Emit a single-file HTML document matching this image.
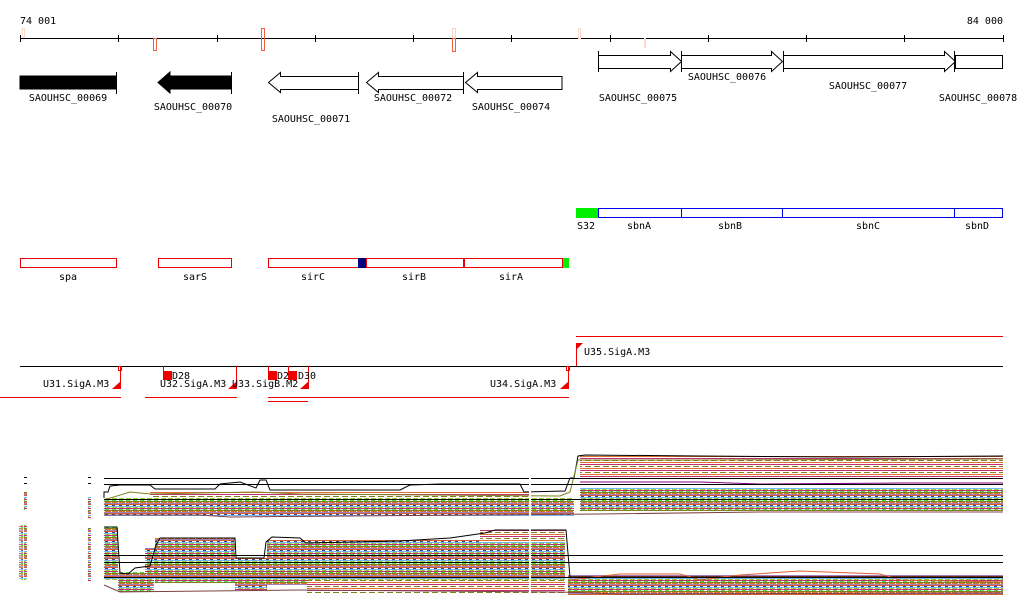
<!DOCTYPE html>
<html><head><meta charset="utf-8"><style>
html,body{margin:0;padding:0;background:#fff;width:1024px;height:611px;overflow:hidden}
svg text{font-family:"DejaVu Sans Mono","Liberation Mono",monospace;font-size:10px;fill:#000}
</style></head><body>
<svg width="1024" height="611" viewBox="0 0 1024 611" xmlns="http://www.w3.org/2000/svg">
<defs>
<pattern id="p" width="7" height="9" patternUnits="userSpaceOnUse">
<rect width="7" height="9" fill="#fff"/>
<rect y="0" width="7" height="1" fill="#d06030"/>
<rect y="1" width="3" height="1" fill="#3a3a8a"/>
<rect y="2" width="7" height="1" fill="#6fb5ff"/>
<rect y="3" width="5" height="1" fill="#9acd32"/>
<rect y="4" width="7" height="1" fill="#c03070"/>
<rect y="5" width="4" height="1" fill="#40e040"/>
<rect y="6" width="7" height="1" fill="#808020"/>
<rect y="7" width="6" height="1" fill="#e07030"/>
<rect y="8" width="7" height="1" fill="#a080c0"/>
</pattern>
<pattern id="q" width="9" height="6" patternUnits="userSpaceOnUse">
<rect width="9" height="6" fill="#fff"/>
<rect y="0" width="9" height="1" fill="#e07030"/>
<rect y="2" width="9" height="1" fill="#c03070"/>
<rect y="4" width="6" height="1" fill="#808020"/>
</pattern>
</defs>

<!-- ruler -->
<text x="20" y="24">74 001</text>
<text x="1003" y="24" text-anchor="end">84 000</text>
<line x1="20" y1="38.5" x2="1003" y2="38.5" stroke="#000"/>
<g stroke="#000">
<line x1="20.5" y1="35" x2="20.5" y2="42"/><line x1="118.5" y1="35" x2="118.5" y2="42"/>
<line x1="217.5" y1="35" x2="217.5" y2="42"/><line x1="315.5" y1="35" x2="315.5" y2="42"/>
<line x1="413.5" y1="35" x2="413.5" y2="42"/><line x1="511.5" y1="35" x2="511.5" y2="42"/>
<line x1="610.5" y1="35" x2="610.5" y2="42"/><line x1="708.5" y1="35" x2="708.5" y2="42"/>
<line x1="806.5" y1="35" x2="806.5" y2="42"/><line x1="904.5" y1="35" x2="904.5" y2="42"/>
<line x1="1003.5" y1="35" x2="1003.5" y2="42"/>
</g>
<g fill="none">
<rect x="22.5" y="28.5" width="2" height="9" stroke="#fcd8cc"/>
<rect x="153.5" y="38.5" width="3" height="12" stroke="#f06040"/>
<rect x="261.5" y="28.5" width="3" height="22" stroke="#f06040"/>
<rect x="452.5" y="28.5" width="3" height="10" stroke="#fcd0c0"/>
<rect x="452.5" y="38.5" width="3" height="13" stroke="#f06040"/>
<rect x="578.5" y="28.5" width="2" height="10" stroke="#fcd8cc"/>
<rect x="644" y="38" width="2" height="10" fill="#fcd8cc"/>
</g>

<!-- genes -->
<g stroke="#000" stroke-width="1">
<rect x="20" y="76" width="96" height="13" fill="#000"/>
<line x1="116.5" y1="72" x2="116.5" y2="94"/>
<polygon points="158,82.5 170,72 170,76 231,76 231,89 170,89 170,93" fill="#000"/>
<line x1="231.5" y1="72" x2="231.5" y2="94"/>
<polygon points="268.5,82.5 280.5,72.5 280.5,76.5 358.5,76.5 358.5,89.5 280.5,89.5 280.5,92.5" fill="#fff"/>
<line x1="358.5" y1="72" x2="358.5" y2="94"/>
<polygon points="366.5,82.5 378.5,72.5 378.5,76.5 463.5,76.5 463.5,89.5 378.5,89.5 378.5,92.5" fill="#fff"/>
<line x1="463.5" y1="72" x2="463.5" y2="94"/>
<polygon points="465.5,82.5 477.5,72.5 477.5,76.5 562,76.5 562,89.5 477.5,89.5 477.5,92.5" fill="#fff"/>
<polygon points="598.5,55.5 670.5,55.5 670.5,51.5 681.5,61.5 670.5,71.5 670.5,68.5 598.5,68.5" fill="#fff"/>
<line x1="598.5" y1="51" x2="598.5" y2="72"/>
<polygon points="681.5,55.5 771.5,55.5 771.5,51.5 782.5,61.5 771.5,71.5 771.5,68.5 681.5,68.5" fill="#fff"/>
<line x1="681.5" y1="51" x2="681.5" y2="72"/>
<polygon points="783.5,55.5 944.5,55.5 944.5,51.5 955.5,61.5 944.5,71.5 944.5,68.5 783.5,68.5" fill="#fff"/>
<line x1="783.5" y1="51" x2="783.5" y2="72"/>
<rect x="955.5" y="55.5" width="47" height="13" fill="#fff"/>
<line x1="954.5" y1="51" x2="954.5" y2="72"/>
</g>
<text x="68" y="101" text-anchor="middle">SAOUHSC_00069</text>
<text x="193" y="110" text-anchor="middle">SAOUHSC_00070</text>
<text x="311" y="122" text-anchor="middle">SAOUHSC_00071</text>
<text x="413" y="101" text-anchor="middle">SAOUHSC_00072</text>
<text x="511" y="110" text-anchor="middle">SAOUHSC_00074</text>
<text x="638" y="101" text-anchor="middle">SAOUHSC_00075</text>
<text x="727" y="80" text-anchor="middle">SAOUHSC_00076</text>
<text x="868" y="89" text-anchor="middle">SAOUHSC_00077</text>
<text x="978" y="101" text-anchor="middle">SAOUHSC_00078</text>

<!-- operon blue -->
<rect x="576" y="208" width="22" height="10" fill="#00ee00"/>
<g fill="#fff" stroke="#0000ee">
<rect x="598.5" y="208.5" width="83" height="9"/>
<rect x="681.5" y="208.5" width="101" height="9"/>
<rect x="782.5" y="208.5" width="172" height="9"/>
<rect x="954.5" y="208.5" width="48" height="9"/>
</g>
<text x="577" y="229">S32</text>
<text x="639" y="229" text-anchor="middle">sbnA</text>
<text x="730" y="229" text-anchor="middle">sbnB</text>
<text x="868" y="229" text-anchor="middle">sbnC</text>
<text x="977" y="229" text-anchor="middle">sbnD</text>

<!-- red boxes -->
<g fill="#fff" stroke="#ee0000">
<rect x="20.5" y="258.5" width="96" height="9"/>
<rect x="158.5" y="258.5" width="73" height="9"/>
<rect x="268.5" y="258.5" width="90" height="9"/>
<rect x="366.5" y="258.5" width="97" height="9"/>
<rect x="464.5" y="258.5" width="98" height="9"/>
</g>
<rect x="358" y="258" width="8" height="10" fill="#000080"/>
<rect x="563" y="258" width="6" height="10" fill="#00ee00"/>
<text x="68" y="280" text-anchor="middle">spa</text>
<text x="195" y="280" text-anchor="middle">sarS</text>
<text x="313" y="280" text-anchor="middle">sirC</text>
<text x="414" y="280" text-anchor="middle">sirB</text>
<text x="511" y="280" text-anchor="middle">sirA</text>

<!-- promoters -->
<line x1="20" y1="366.5" x2="1003" y2="366.5" stroke="#000"/>
<line x1="576" y1="336.5" x2="1003" y2="336.5" stroke="#ee0000"/>
<g stroke="#ee0000" fill="none">
<line x1="576.5" y1="343" x2="576.5" y2="366"/>
<line x1="0" y1="397.5" x2="121" y2="397.5"/>
<line x1="145" y1="397.5" x2="237" y2="397.5"/>
<line x1="268" y1="397.5" x2="569" y2="397.5"/>
<line x1="268" y1="401.5" x2="308" y2="401.5"/>
<line x1="120.5" y1="366" x2="120.5" y2="389"/>
<rect x="118.5" y="366.5" width="3" height="4"/>
<line x1="236.5" y1="366" x2="236.5" y2="389"/>
<line x1="163.5" y1="366" x2="163.5" y2="372"/>
<line x1="268.5" y1="366" x2="268.5" y2="372"/>
<line x1="288.5" y1="366" x2="288.5" y2="372"/>
<line x1="308.5" y1="366" x2="308.5" y2="389"/>
<line x1="568.5" y1="366" x2="568.5" y2="389"/>
<rect x="566.5" y="366.5" width="3" height="4"/>
</g>
<g fill="#ee0000">
<polygon points="576,343 583,343 576,350"/>
<polygon points="112,389 121,389 121,381"/>
<polygon points="228,389 237,389 237,381"/>
<polygon points="300,389 309,389 309,381"/>
<polygon points="560,389 569,389 569,381"/>
<rect x="163" y="371" width="9" height="9"/>
<rect x="268" y="371" width="9" height="9"/>
<rect x="288" y="371" width="9" height="9"/>
</g>
<text x="584" y="355">U35.SigA.M3</text>
<text x="43" y="387">U31.SigA.M3</text>
<text x="160" y="387">U32.SigA.M3</text>
<text x="232" y="387">U33.SigB.M2</text>
<text x="490" y="387">U34.SigA.M3</text>
<text x="172" y="379">D28</text>
<text x="277" y="379">D2</text>
<text x="298" y="379">D30</text>

<!-- legends -->
<g>
<rect x="24" y="477" width="3" height="1" fill="#000"/><rect x="24" y="483" width="3" height="1" fill="#000"/>
<rect x="24" y="492" width="3" height="18" fill="url(#p)"/>
<rect x="88" y="477" width="3" height="1" fill="#000"/><rect x="88" y="483" width="3" height="1" fill="#000"/>
<rect x="88" y="497" width="3" height="22" fill="url(#p)"/>
<rect x="19" y="525" width="4" height="55" fill="url(#p)" opacity=".8"/>
<rect x="24" y="525" width="3" height="55" fill="url(#p)"/>
<rect x="88" y="527" width="3" height="55" fill="url(#p)"/>
</g>

<!-- panel 1 -->
<g>
<rect x="104" y="498" width="470" height="18" fill="url(#p)"/>
<rect x="150" y="491" width="380" height="7" fill="url(#q)"/>
<rect x="580" y="488" width="423" height="23" fill="url(#p)"/>
<rect x="580" y="455" width="423" height="25" fill="url(#q)"/>
<polyline fill="none" stroke="#000" points="104,498 104,492 108,492 110,486 120,485 150,485 155,489 215,489 220,484 240,482 256,488 260,480 266,480 270,490 400,490 410,485 440,484 520,484 524,492 565,491 570,478 574,478 578,456 585,455 700,456 840,457 1003,456"/>
<polyline fill="none" stroke="#808020" points="104,500 130,492 150,494 200,493 256,492 300,494 560,496 570,492 578,460 700,460 1003,459"/>
<polyline fill="none" stroke="#804040" points="104,515 200,515 230,517 600,514 760,512 1003,512"/>
<polyline fill="none" stroke="#800080" points="580,482 700,482 760,484 900,483 1003,483"/>
</g>
<g stroke="#000">
<line x1="104" y1="478.5" x2="1003" y2="478.5"/>
<line x1="104" y1="484.5" x2="1003" y2="484.5"/>
<line x1="104" y1="499.5" x2="1003" y2="499.5"/>
</g>

<!-- panel 2 -->
<g>
<rect x="104" y="527" width="14" height="53" fill="url(#p)"/>
<rect x="118" y="572" width="36" height="20" fill="url(#p)"/>
<rect x="145" y="548" width="15" height="30" fill="url(#p)"/>
<rect x="155" y="538" width="80" height="45" fill="url(#p)"/>
<rect x="235" y="558" width="32" height="32" fill="url(#p)"/>
<rect x="267" y="540" width="40" height="45" fill="url(#p)"/>
<rect x="307" y="540" width="258" height="40" fill="url(#p)"/>
<rect x="480" y="530" width="85" height="12" fill="url(#q)"/>
<rect x="307" y="580" width="258" height="13" fill="url(#q)"/>
<rect x="568" y="575" width="435" height="20" fill="url(#p)"/>
<polyline fill="none" stroke="#000" points="104,527 117,527 120,573 128,574 135,568 150,566 156,545 160,538 235,538 236,558 264,558 266,542 272,537 300,538 306,543 400,541 450,538 485,533 495,530 560,530 566,530 570,577 1003,577"/>
<polyline fill="none" stroke="#e06030" points="570,580 620,574 680,574 700,580 740,575 800,571 880,574 900,580 1003,582"/>
<polyline fill="none" stroke="#804040" points="104,585 120,592 300,590 560,592 620,594 1003,593"/>
</g>
<g stroke="#000">
<line x1="104" y1="555.5" x2="1003" y2="555.5"/>
<line x1="104" y1="562.5" x2="1003" y2="562.5"/>
<line x1="104" y1="577.5" x2="1003" y2="577.5"/>
</g>
<rect x="529" y="470" width="2" height="130" fill="#fff"/>
</svg>
</body></html>
